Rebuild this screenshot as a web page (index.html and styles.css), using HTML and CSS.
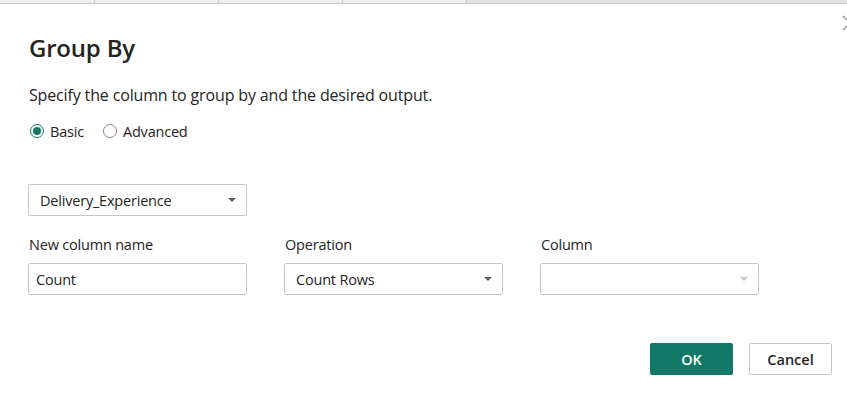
FILE: index.html
```html
<!DOCTYPE html>
<html>
<head>
<meta charset="utf-8">
<link rel="stylesheet" href="styles.css">
</head>
<body>
<div class="topbar">
  <div class="cell c1"></div>
  <div class="cell c2"></div>
  <div class="cell c3"></div>
  <div class="cell c4"></div>
  <div class="cell c5"></div>
</div>
<div class="dialog">
  <svg class="close" width="16" height="16" viewBox="0 0 16 16"><path d="M1 1 L15 15 M15 1 L1 15" stroke="#8a8886" stroke-width="1.2" fill="none"/></svg>
  <h1 class="title">Group By</h1>
  <p class="desc">Specify the column to group by and the desired output.</p>
  <div class="radios">
    <label class="radio"><span class="dot checked"></span>Basic</label>
    <label class="radio"><span class="dot"></span>Advanced</label>
  </div>
  <div class="select first">
    <span class="val">Delivery_Experience</span>
    <span class="caret"></span>
  </div>
  <div class="grid">
    <div class="field">
      <div class="label">New column name</div>
      <div class="input"><span class="val">Count</span></div>
    </div>
    <div class="field">
      <div class="label">Operation</div>
      <div class="select"><span class="val">Count Rows</span><span class="caret"></span></div>
    </div>
    <div class="field">
      <div class="label">Column</div>
      <div class="select disabled"><span class="val"></span><span class="caret"></span></div>
    </div>
  </div>
  <div class="buttons">
    <button class="btn ok">OK</button>
    <button class="btn cancel">Cancel</button>
  </div>
</div>
</body>
</html>
```
FILE: styles.css
```css
* { box-sizing: border-box; }
html, body { margin: 0; padding: 0; background: #fff; overflow: hidden; }
body { font-family: "Open Sans", "Noto Sans", sans-serif; color: #252423; width: 847px; height: 410px; }

.topbar { display: flex; height: 4px; border-bottom: 1px solid #c6c6c6; }
.cell { height: 3px; background: #eeeeee; border-right: 1px solid #c9c9c9; }
.c1 { width: 95px; }
.c2 { width: 124px; }
.c3 { width: 124px; }
.c4 { width: 124px; }
.c5 { flex: 1; background: #e4e4e4; border-right: none; }

.dialog { position: relative; padding: 0 0 0 28px; }
.close { position: absolute; right: -11px; top: 11px; }

.title { margin: 0; padding-top: 28px; font-size: 24px; font-weight: 600; line-height: 32px; letter-spacing: -0.2px; padding-left: 1px; }
.desc { margin: 21px 0 0 1px; font-size: 16px; line-height: 20px; letter-spacing: -0.15px; }

.radios { display: flex; align-items: center; gap: 19px; margin-top: 16px; padding-left: 2px; height: 20px; }
.radio { display: flex; align-items: center; font-size: 14.5px; letter-spacing: -0.2px; }
.dot { width: 14px; height: 14px; border-radius: 50%; border: 1px solid #8a8886; margin-right: 6px; position: relative; }
.dot.checked { border-color: #117865; }
.dot.checked::after { content: ""; position: absolute; left: 2px; top: 2px; width: 8px; height: 8px; border-radius: 50%; background: #117865; }

.select, .input { width: 219px; height: 32px; border: 1px solid #c8c6c4; border-radius: 2px; display: flex; align-items: center; padding: 0 10px 0 11px; font-size: 14.5px; letter-spacing: -0.2px; background: #fff; }
.select.first { margin-top: 43px; }
.input { padding-left: 7px; }
.val { flex: 1; }
.caret { width: 0; height: 0; border-left: 4px solid transparent; border-right: 4px solid transparent; border-top: 4px solid #605e5c; margin-right: 0; }
.disabled .caret { border-top-color: #c8c6c4; }

.grid { display: flex; gap: 37px; margin-top: 19px; }
.field { display: flex; flex-direction: column; }
.label { font-size: 14.5px; line-height: 20px; height: 20px; letter-spacing: -0.2px; margin-bottom: 8px; padding-left: 1px; }

.buttons { display: flex; justify-content: flex-end; gap: 16px; margin-top: 48px; padding-right: 15px; }
.btn { height: 32px; border-radius: 2px; font-family: "Open Sans", "Noto Sans", sans-serif; font-size: 14.5px; font-weight: 600; cursor: pointer; }
.ok { width: 83px; background: #117865; color: #fff; border: none; }
.cancel { width: 83px; background: #fff; color: #252423; border: 1px solid #c8c6c4; }
```
